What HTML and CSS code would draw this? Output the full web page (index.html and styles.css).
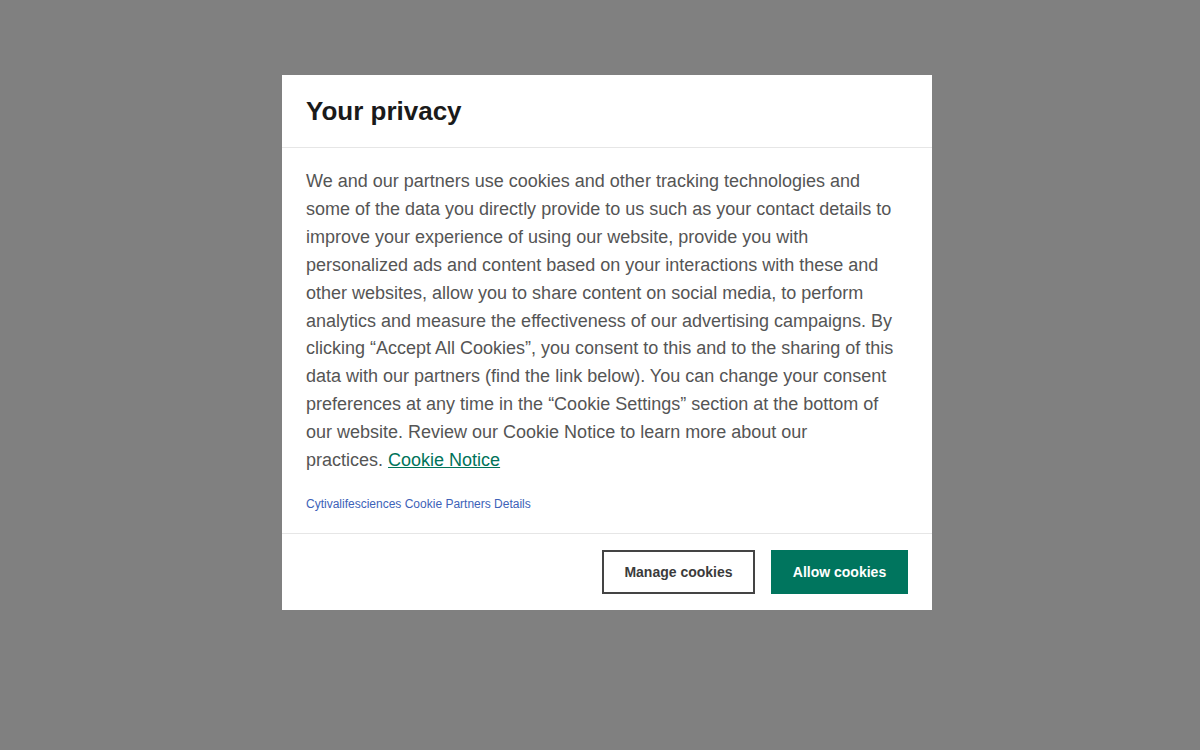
FILE: index.html
```html
<!DOCTYPE html>
<html lang="en">
<head>
<meta charset="utf-8">
<title>Your privacy</title>
<link rel="stylesheet" href="styles.css">
</head>
<body>
<div class="overlay">
  <div class="dialog" role="dialog" aria-labelledby="title">
    <div class="dialog-header">
      <h2 id="title" class="title">Your privacy</h2>
    </div>
    <div class="dialog-body">
      <p class="desc">We and our partners use cookies and other tracking technologies and some of the data you directly provide to us such as your contact details to improve your experience of using our website, provide you with personalized ads and content based on your interactions with these and other websites, allow you to share content on social media, to perform analytics and measure the effectiveness of our advertising campaigns. By clicking “Accept All Cookies”, you consent to this and to the sharing of this data with our partners (find the link below). You can change your consent preferences at any time in the “Cookie Settings” section at the bottom of our website. Review our Cookie Notice to learn more about our practices.&nbsp;<a class="notice-link" href="#">Cookie&nbsp;Notice</a></p>
      <a class="partners-link" href="#">Cytivalifesciences Cookie Partners Details</a>
    </div>
    <div class="dialog-footer">
      <button class="btn btn-outline">Manage cookies</button>
      <button class="btn btn-primary">Allow cookies</button>
    </div>
  </div>
</div>
</body>
</html>
```
FILE: styles.css
```css
html, body {
  margin: 0;
  padding: 0;
  height: 100%;
}
body {
  background: #808080;
  font-family: "Liberation Sans", Arial, sans-serif;
}
.overlay {
  display: flex;
  justify-content: center;
  align-items: flex-start;
  padding-top: 75px;
  padding-left: 14px;
}
.dialog {
  width: 650px;
  background: #fff;
}
.dialog-header {
  padding: 20px 24px;
  border-bottom: 1px solid #e6e6e6;
}
.title {
  margin: 0;
  font-size: 26px;
  line-height: 32px;
  font-weight: 700;
  color: #1a1a1a;
}
.dialog-body {
  padding: 20px 24px 20px;
  border-bottom: 1px solid #e6e6e6;
}
.desc {
  margin: 0;
  font-size: 18px;
  line-height: 27.9px;
  color: #555;
}
.notice-link {
  color: #00735a;
  text-decoration: underline;
}
.partners-link {
  display: block;
  margin-top: 20px;
  font-size: 12px;
  line-height: 18px;
  color: #3d62b8;
  text-decoration: none;
}
.dialog-footer {
  display: flex;
  justify-content: flex-end;
  gap: 16px;
  padding: 16px 24px 16px;
}
.btn {
  height: 44px;
  font-family: "Liberation Sans", Arial, sans-serif;
  font-size: 14px;
  font-weight: 700;
  cursor: pointer;
}
.btn-outline {
  width: 153px;
  background: #fff;
  color: #3b3b3b;
  border: 2px solid #444;
}
.btn-primary {
  width: 137px;
  background: #00755e;
  color: #fff;
  border: none;
}
```
